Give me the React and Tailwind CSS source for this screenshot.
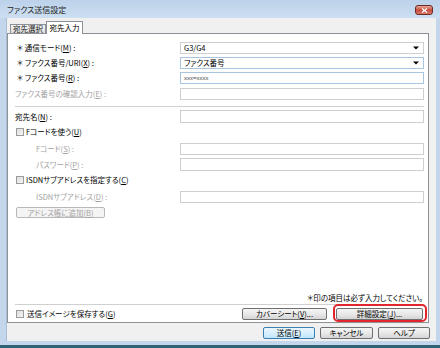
const U = ({ children }) => <span className="underline decoration-[0.5px] underline-offset-[1px]">{children}</span>;

const Box = ({ children, blue, className }) => (
  <div
    className={
      "h-full w-[244px] flex items-center pl-[3px] pr-[4px] bg-white border " +
      (blue ? "border-[#a9c4df] " : "border-[#cfcfcf] ") +
      (className || "")
    }
  >
    {children}
  </div>
);

const Arrow = () => (
  <svg width="6" height="4" viewBox="0 0 6 4" className="ml-auto">
    <path d="M0 0.5 H6 L3 3.5 Z" fill="#000" />
  </svg>
);

const Check = () => (
  <div className="w-[8px] h-[8px] border border-[#9a9a9a] bg-linear-to-br from-[#dcdcdc] to-[#f7f7f7] shrink-0" />
);

const Btn = ({ children, className }) => (
  <div
    className={
      "flex items-center justify-center rounded-[2px] border border-[#707070] bg-linear-to-b from-[#f5f5f5] via-[#e9e9e9] to-[#d5d5d5] " +
      (className || "")
    }
  >
    {children}
  </div>
);

export default function App() {
  return (
    <div className="w-[440px] h-[348px] bg-[#2f6177] font-['Noto_Sans_CJK_JP',sans-serif] [font-feature-settings:'palt'] text-[7.5px] leading-none text-black overflow-hidden">
      <div className="h-[345px] flex flex-col bg-[#c3d6eb]">
        {/* title bar */}
        <div className="h-[18px] flex items-center justify-between pl-[7px] pr-[7px] bg-linear-to-b from-[#bcd2ea] to-[#cddff1]">
          <span className="text-[8px] text-[#1e1e1e] mt-[2px]">ファクス送信設定</span>
          <div className="w-[18px] h-[10px] mt-[2px] rounded-[3px] border border-[#6b2a22] bg-linear-to-b from-[#e9a89a] via-[#c84a3c] to-[#d9776a] flex items-center justify-center">
            <svg width="7" height="5" viewBox="0 0 7 5">
              <path d="M1 0.5 L6 4.5 M6 0.5 L1 4.5" stroke="#fff" strokeWidth="1.3" />
            </svg>
          </div>
        </div>
        {/* client */}
        <div className="flex-1 ml-[6px] mr-[4px] mb-[4px] bg-[#f0f0f0] border-l border-[#a9bdd4] flex flex-col pr-[7px] pt-[3px]">
          {/* tabs */}
          <div className="h-[12px] flex items-end pl-[3px]">
            <div className="w-[36px] h-[9px] border border-b-0 border-[#8e9198] bg-linear-to-b from-[#f4f4f4] to-[#dedede] flex items-center justify-center text-[#1a1a1a]">
              宛先選択
            </div>
            <div className="relative z-10 w-[37px] h-[13px] -mb-px border border-b-0 border-[#8e9198] bg-white flex items-center justify-center">
              宛先入力
            </div>
          </div>
          {/* panel */}
          <div className="h-[290px] border border-[#8e9198] bg-white flex flex-col pl-[7px] pr-[4px]">
            <div className="mt-[8px] h-[12px] flex items-center">
              <div className="w-[165px] pl-[2px]">＊ 通信モード(<U>M</U>) :</div>
              <Box>
                G3/G4
                <Arrow />
              </Box>
            </div>
            <div className="mt-[3px] h-[12px] flex items-center">
              <div className="w-[165px] pl-[2px]">＊ ファクス番号/URI(<U>X</U>) :</div>
              <Box blue>
                ファクス番号
                <Arrow />
              </Box>
            </div>
            <div className="mt-[3px] h-[12px] flex items-center">
              <div className="w-[165px] pl-[2px]">＊ ファクス番号(<U>R</U>) :</div>
              <Box blue>
                <span className="text-[6px] text-[#444] font-['Liberation_Sans',sans-serif]">xxx=xxxx</span>
              </Box>
            </div>
            <div className="mt-[4px] h-[12px] flex items-center">
              <div className="w-[165px] text-[#a3a3a3]">ファクス番号の確認入力(<U>E</U>) :</div>
              <Box />
            </div>
            <div className="mt-[6px] h-px w-[409px] bg-[#d0d0d0]" />
            <div className="mt-[3px] h-[13px] flex items-center">
              <div className="w-[165px]">宛先名(<U>N</U>) :</div>
              <Box />
            </div>
            <div className="mt-[3px] h-[12px] flex items-center gap-[2px] pl-[1px]">
              <Check />
              <span>Fコードを使う(<U>U</U>)</span>
            </div>
            <div className="mt-[5px] h-[12px] flex items-center">
              <div className="w-[165px] pl-[21px] text-[#a3a3a3]">Fコード(<U>S</U>) :</div>
              <Box />
            </div>
            <div className="mt-[3px] h-[13px] flex items-center">
              <div className="w-[165px] pl-[21px] text-[#a3a3a3]">パスワード(<U>P</U>) :</div>
              <Box />
            </div>
            <div className="mt-[3px] h-[12px] flex items-center gap-[2px] pl-[1px]">
              <Check />
              <span>ISDNサブアドレスを指定する(<U>C</U>)</span>
            </div>
            <div className="mt-[5px] h-[12px] flex items-center">
              <div className="w-[165px] pl-[21px] text-[#a3a3a3]">ISDNサブアドレス(<U>D</U>) :</div>
              <Box />
            </div>
            <div className="mt-[4px] ml-[1px] w-[89px] h-[11px] rounded-[2px] border border-[#b5b9bc] bg-[#f4f4f4] flex items-center justify-center text-[#a3a3a3]">
              アドレス帳に追加(<U>B</U>)
            </div>
            <div className="flex-1" />
            <div className="h-[10px] flex items-center justify-end pr-[1px]">＊印の項目は必ず入力してください。</div>
            <div className="mt-[1px] h-px w-[409px] bg-[#d0d0d0]" />
            <div className="h-[17px] flex items-center">
              <div className="flex items-center gap-[3px] pl-[1px]">
                <Check />
                <span>送信イメージを保存する(<U>G</U>)</span>
              </div>
              <div className="flex-1" />
              <Btn className="w-[85px] h-[12px]">
                カバーシート(<U>V</U>)...
              </Btn>
              <div className="relative ml-[9px] mr-[1px]">
                <Btn className="w-[87px] h-[12px]">
                  詳細設定(<U>J</U>)...
                </Btn>
                <div className="absolute -left-[3px] -right-[4px] -top-[4px] -bottom-[2px] border-2 border-[#e3262d] rounded-[5px]" />
              </div>
            </div>
          </div>
          {/* dialog buttons */}
          <div className="mt-[4px] h-[12px] flex justify-end gap-[5px] -mr-[1px]">
            <Btn className="w-[52px] h-[12px] !border-[#3c7fb1] !from-[#eaf6fd] !via-[#d9effc] !to-[#bee6fd]">
              送信(<U>E</U>)
            </Btn>
            <Btn className="w-[53px] h-[12px]">キャンセル</Btn>
            <Btn className="w-[52px] h-[12px]">ヘルプ</Btn>
          </div>
        </div>
      </div>
    </div>
  );
}
